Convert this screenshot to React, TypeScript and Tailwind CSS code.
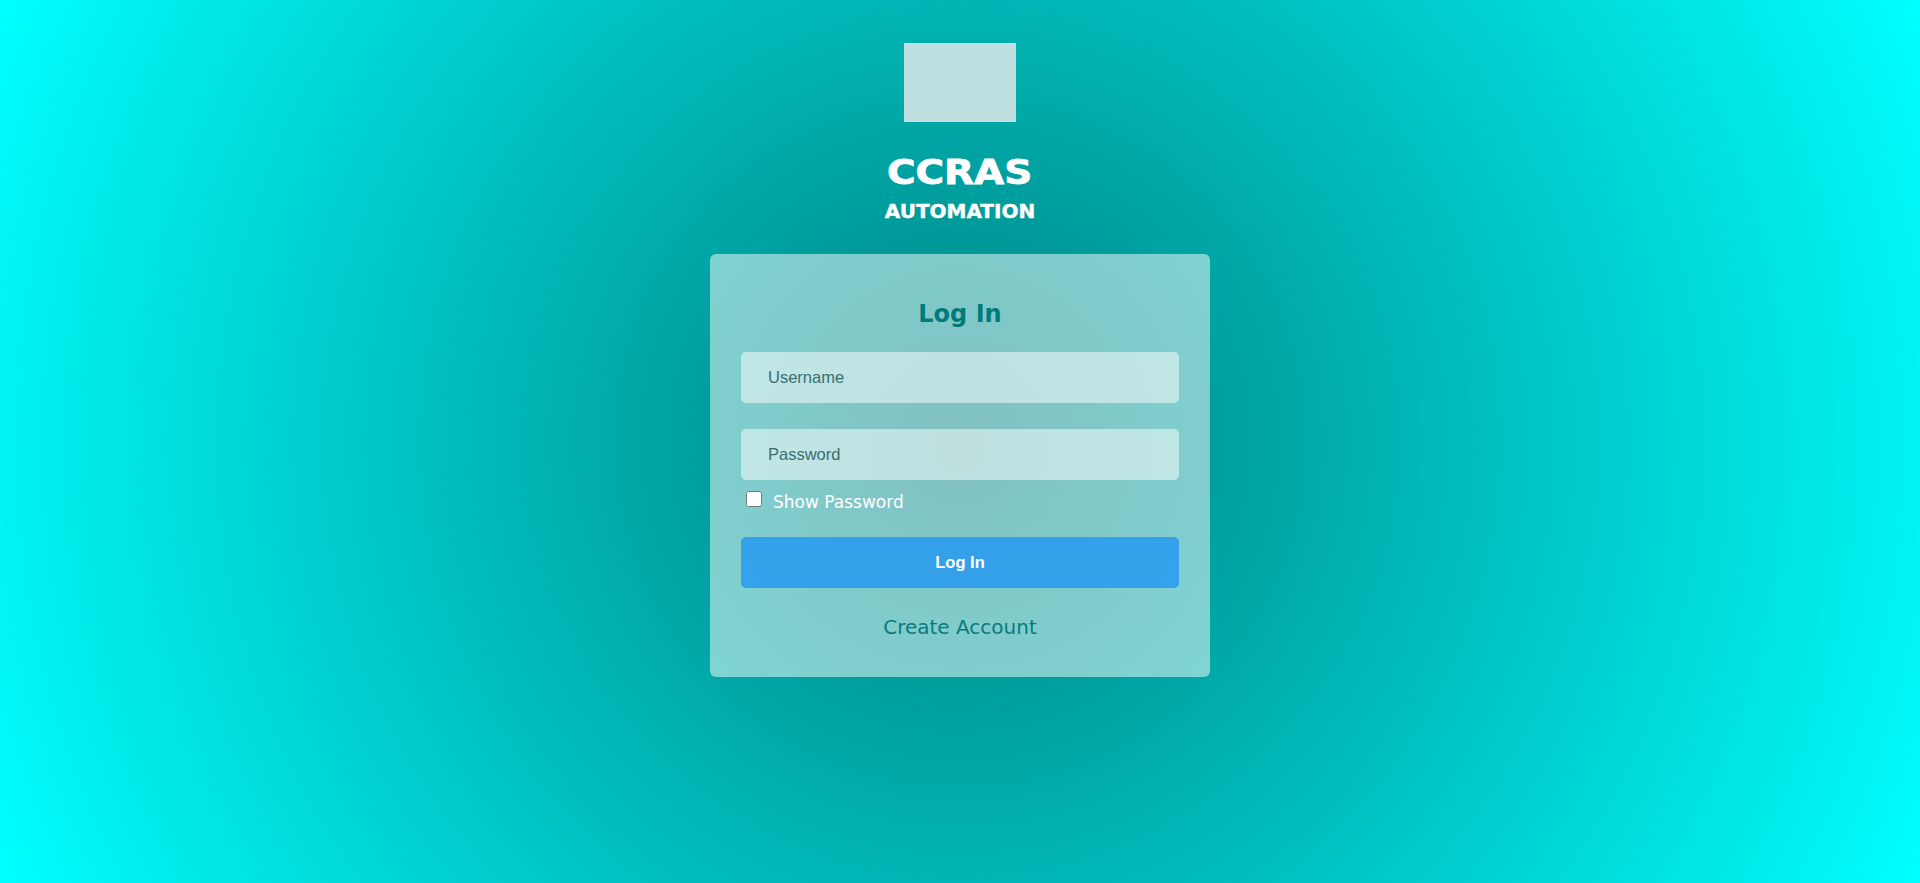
import React, { useState } from "react"

const App = () => {
  const [show, setShow] = useState(false)
  return (
    <div className="min-h-screen w-full bg-[radial-gradient(circle,#008080_0%,#00ffff_100%)] flex flex-col items-center font-['DejaVu_Sans',Verdana,sans-serif]">
      {/* logo placeholder */}
      <div className="mt-[43px] w-[112px] h-[79px] bg-[#bfe0e0]" />

      <h1 className="mt-[34px] text-[33px] leading-none font-bold text-white scale-x-[1.18] [-webkit-text-stroke:0.8px_white]">CCRAS</h1>
      <div className="mt-[12px] text-[20px] leading-none font-bold text-white [-webkit-text-stroke:0.4px_white]">AUTOMATION</div>

      <div className="mt-[33px] w-[500px] rounded-md bg-white/50 px-[31px] pt-[48px] pb-[40px] flex flex-col">
        <h2 className="text-center text-[24px] leading-none font-bold text-[#007b7b]">Log In</h2>

        <input
          type="text"
          placeholder="Username"
          className="mt-[26px] h-[51px] w-full rounded-[5px] bg-white/50 pl-[27px] text-[16.5px] font-['Liberation_Sans',Arial,sans-serif] text-[#2f5f5f] placeholder:text-[#3a6e6e] outline-none"
        />
        <input
          type={show ? "text" : "password"}
          placeholder="Password"
          className="mt-[26px] h-[51px] w-full rounded-[5px] bg-white/50 pl-[27px] text-[16.5px] font-['Liberation_Sans',Arial,sans-serif] text-[#2f5f5f] placeholder:text-[#3a6e6e] outline-none"
        />

        <label className="mt-[12px] flex items-start pl-[5px] text-[17px] leading-[20px] text-white">
          <input
            type="checkbox"
            checked={show}
            onChange={() => setShow(!show)}
            className="mt-[-1px] w-[16px] h-[16px] m-0"
          />
          <span className="ml-[11px]">Show Password</span>
        </label>

        <button className="mt-[25px] h-[51px] w-full rounded-[5px] bg-[#2196f3]/80 text-white font-bold text-[16.5px] font-['Liberation_Sans',Arial,sans-serif]">
          Log In
        </button>

        <a className="mt-[29px] text-center text-[20px] leading-none text-[#0a7b7b]" href="#">
          Create Account
        </a>
      </div>
    </div>
  )
}

export default App
